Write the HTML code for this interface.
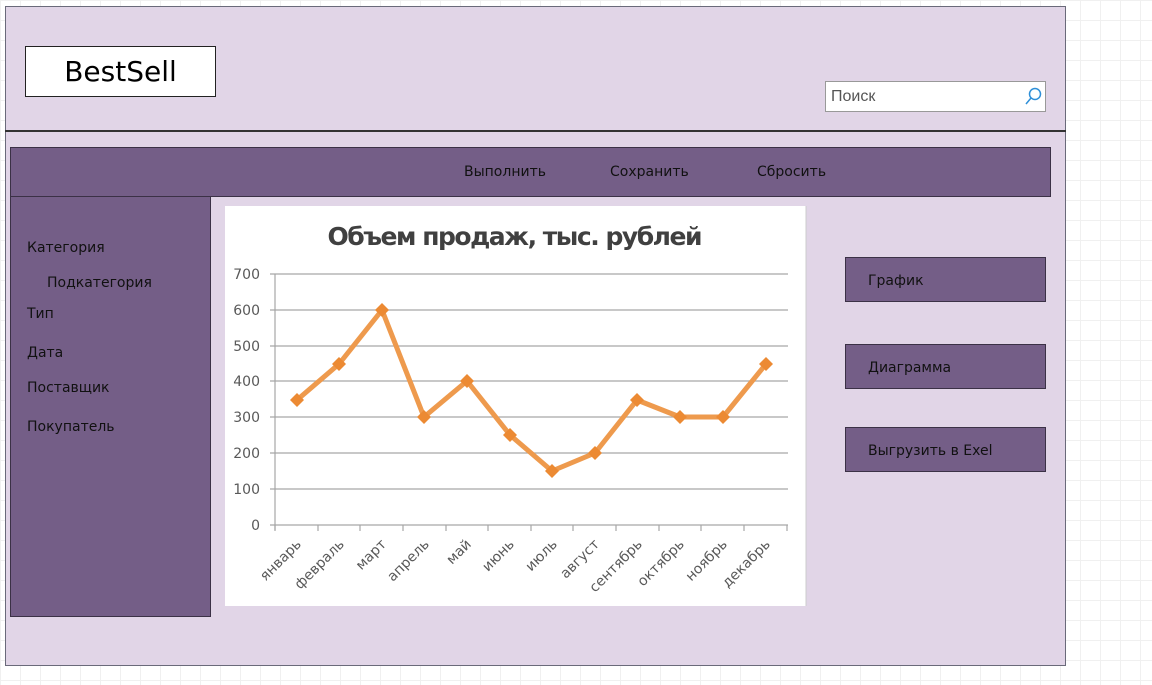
<!DOCTYPE html>
<html><head><meta charset="utf-8"><style>
body{margin:0;width:1152px;height:685px;position:relative;overflow:hidden;background:#fff;
background-image:linear-gradient(#f0f0f0 1px,transparent 1px),linear-gradient(90deg,#f0f0f0 1px,transparent 1px);background-size:20px 20px;
font-family:"Liberation Sans","DejaVu Sans",sans-serif;}
.a{position:absolute;box-sizing:border-box}
.frame{left:5px;top:6px;width:1061px;height:660px;background:#e1d5e7;border:1px solid #6a6a7a}
.hl{left:5px;top:130px;width:1061px;height:2px;background:#333}
.dark{background:#745e87;border:1px solid #3b3146}
.t{position:absolute;font-size:14px;color:#111;font-family:"DejaVu Sans",sans-serif}
.btn{left:845px;width:201px;height:45px}
.btn span{position:absolute;left:22px;top:15px;font-size:14px;color:#111;font-family:"DejaVu Sans",sans-serif}
</style></head><body>
<div class="a frame"></div>
<div class="a hl"></div>
<div class="a" style="left:25px;top:46px;width:191px;height:51px;background:#fff;border:1px solid #222;text-align:center;font:28px 'DejaVu Sans',sans-serif;line-height:50px;color:#000">BestSell</div>
<div class="a" style="left:825px;top:81px;width:221px;height:31px;background:#fff;border:1px solid #999;font-size:16px;color:#555;padding:6px 0 0 5px">Поиск
<svg style="position:absolute;right:3px;top:5px" width="18" height="20" viewBox="0 0 18 20"><circle cx="11" cy="7" r="5.5" fill="none" stroke="#2e8fd8" stroke-width="1.5"/><path d="M7 11 L2 17" stroke="#2e8fd8" stroke-width="1.5"/></svg></div>
<div class="a dark" style="left:10px;top:196px;width:201px;height:421px"></div>
<div class="a dark" style="left:10px;top:147px;width:1041px;height:50px"></div>
<div class="t" style="left:464px;top:164px">Выполнить</div>
<div class="t" style="left:610px;top:164px">Сохранить</div>
<div class="t" style="left:757px;top:164px">Сбросить</div>
<div class="t" style="left:27px;top:240px">Категория</div>
<div class="t" style="left:47px;top:275px">Подкатегория</div>
<div class="t" style="left:27px;top:306px">Тип</div>
<div class="t" style="left:27px;top:345px">Дата</div>
<div class="t" style="left:27px;top:380px">Поставщик</div>
<div class="t" style="left:27px;top:419px">Покупатель</div>
<div class="a dark btn" style="top:257px"><span>График</span></div>
<div class="a dark btn" style="top:344px"><span>Диаграмма</span></div>
<div class="a dark btn" style="top:427px"><span>Выгрузить в Exel</span></div>
<svg class="a" style="left:0;top:0" width="1152" height="685">
<rect x="225" y="206" width="581" height="400" fill="#fff"/>
<line x1="806" y1="206" x2="806" y2="606" stroke="#ccc"/>
<text x="515" y="245" text-anchor="middle" font-family="DejaVu Sans,sans-serif" font-weight="bold" font-size="25" fill="#404040" textLength="375">Объем продаж, тыс. рублей</text>
<g stroke="#a6a6a6" stroke-width="1.2">
<line x1="270" y1="274" x2="788" y2="274"/><line x1="270" y1="310" x2="788" y2="310"/><line x1="270" y1="346" x2="788" y2="346"/><line x1="270" y1="381" x2="788" y2="381"/><line x1="270" y1="417" x2="788" y2="417"/><line x1="270" y1="453" x2="788" y2="453"/><line x1="270" y1="489" x2="788" y2="489"/><line x1="270" y1="525" x2="788" y2="525"/>
<line x1="275" y1="274" x2="275" y2="530"/>
<line x1="275" y1="525" x2="275" y2="531"/><line x1="318" y1="525" x2="318" y2="531"/><line x1="360" y1="525" x2="360" y2="531"/><line x1="403" y1="525" x2="403" y2="531"/><line x1="446" y1="525" x2="446" y2="531"/><line x1="488" y1="525" x2="488" y2="531"/><line x1="531" y1="525" x2="531" y2="531"/><line x1="573" y1="525" x2="573" y2="531"/><line x1="616" y1="525" x2="616" y2="531"/><line x1="659" y1="525" x2="659" y2="531"/><line x1="701" y1="525" x2="701" y2="531"/><line x1="744" y1="525" x2="744" y2="531"/><line x1="787" y1="525" x2="787" y2="531"/>
</g>
<g font-family="DejaVu Sans,sans-serif" font-size="14" fill="#595959" text-anchor="end">
<text x="260" y="279">700</text><text x="260" y="315">600</text><text x="260" y="351">500</text><text x="260" y="386">400</text><text x="260" y="422">300</text><text x="260" y="458">200</text><text x="260" y="494">100</text><text x="260" y="530">0</text>
</g>
<g font-family="DejaVu Sans,sans-serif" font-size="14" fill="#595959" text-anchor="end">
<text transform="translate(302,545) rotate(-45)">январь</text>
<text transform="translate(345,545) rotate(-45)">февраль</text>
<text transform="translate(387,545) rotate(-45)">март</text>
<text transform="translate(430,545) rotate(-45)">апрель</text>
<text transform="translate(472,545) rotate(-45)">май</text>
<text transform="translate(515,545) rotate(-45)">июнь</text>
<text transform="translate(558,545) rotate(-45)">июль</text>
<text transform="translate(600,545) rotate(-45)">август</text>
<text transform="translate(643,545) rotate(-45)">сентябрь</text>
<text transform="translate(685,545) rotate(-45)">октябрь</text>
<text transform="translate(728,545) rotate(-45)">ноябрь</text>
<text transform="translate(771,545) rotate(-45)">декабрь</text>
</g>
<polyline fill="none" stroke="#ee9a4d" stroke-width="5" stroke-linejoin="round" points="297,400 339,364 382,310 424,417 467,381 510,435 552,471 595,453 637,400 680,417 723,417 766,364"/>
<g fill="#ec8a33">
<path d="M297,393l7,7l-7,7l-7,-7z"/><path d="M339,357l7,7l-7,7l-7,-7z"/><path d="M382,303l7,7l-7,7l-7,-7z"/><path d="M424,410l7,7l-7,7l-7,-7z"/><path d="M467,374l7,7l-7,7l-7,-7z"/><path d="M510,428l7,7l-7,7l-7,-7z"/><path d="M552,464l7,7l-7,7l-7,-7z"/><path d="M595,446l7,7l-7,7l-7,-7z"/><path d="M637,393l7,7l-7,7l-7,-7z"/><path d="M680,410l7,7l-7,7l-7,-7z"/><path d="M723,410l7,7l-7,7l-7,-7z"/><path d="M766,357l7,7l-7,7l-7,-7z"/>
</g>
</svg>
</body></html>
